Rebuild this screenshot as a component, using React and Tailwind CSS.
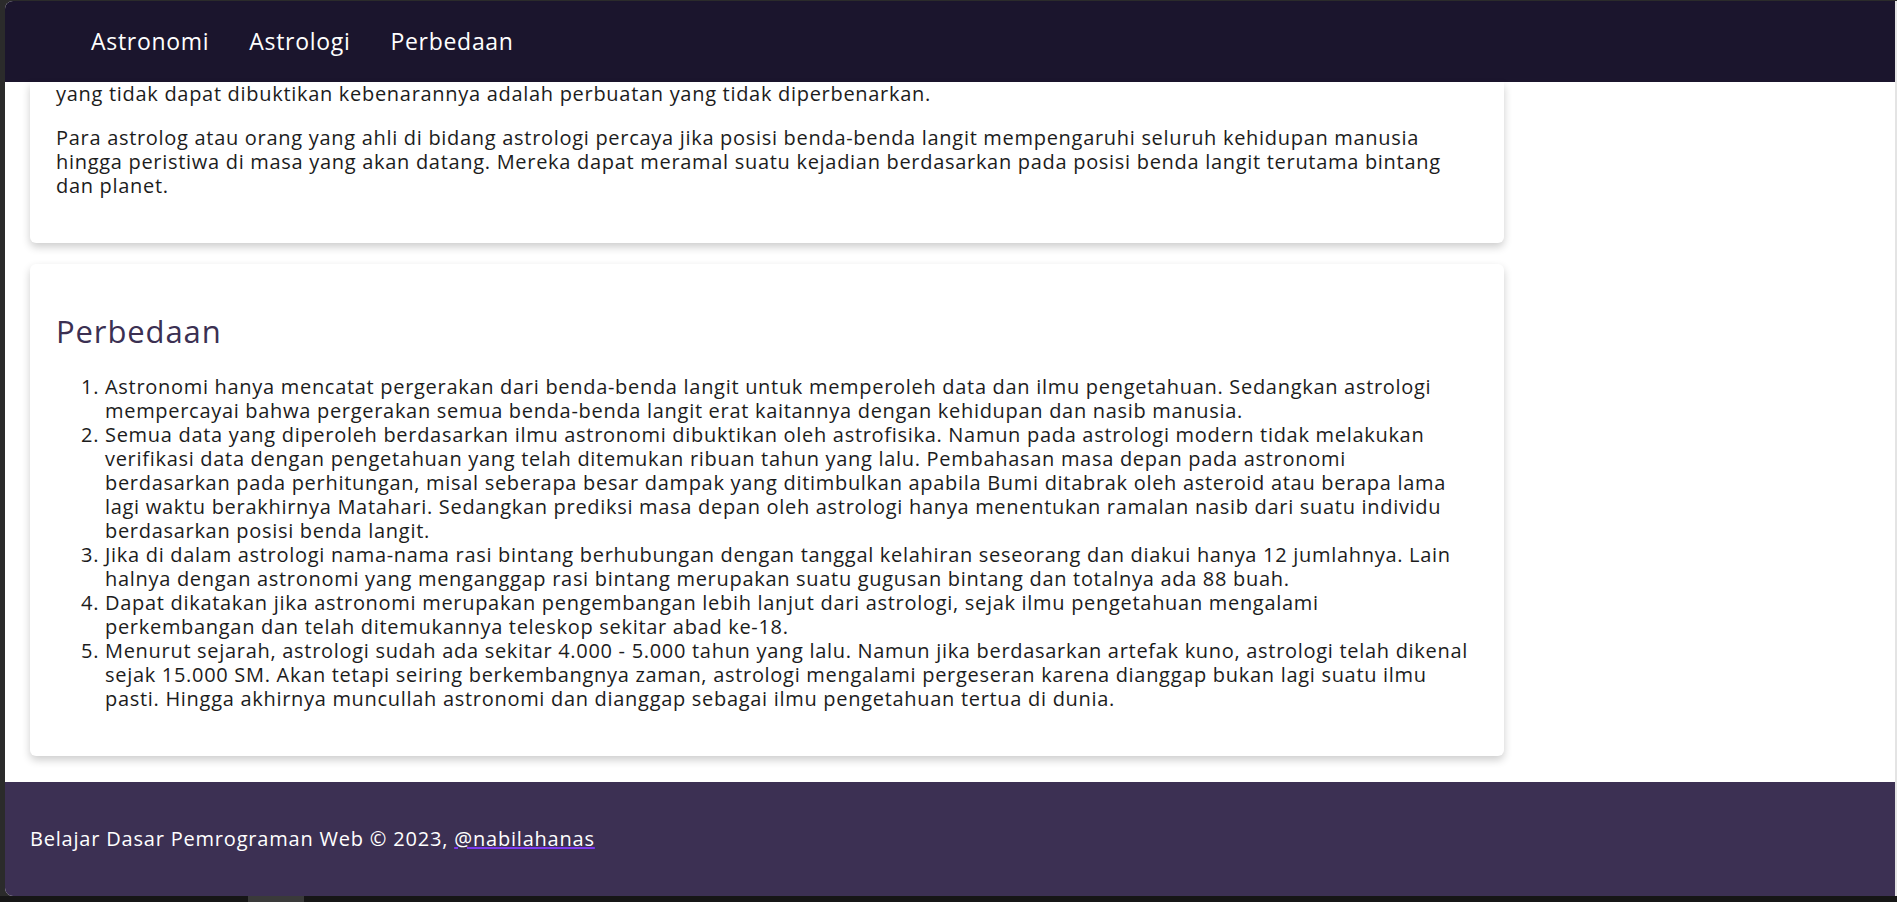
import React from 'react'

const items = [
    'Astronomi hanya mencatat pergerakan dari benda-benda langit untuk memperoleh data dan ilmu pengetahuan. Sedangkan astrologi mempercayai bahwa pergerakan semua benda-benda langit erat kaitannya dengan kehidupan dan nasib manusia.',
    'Semua data yang diperoleh berdasarkan ilmu astronomi dibuktikan oleh astrofisika. Namun pada astrologi modern tidak melakukan verifikasi data dengan pengetahuan yang telah ditemukan ribuan tahun yang lalu. Pembahasan masa depan pada astronomi berdasarkan pada perhitungan, misal seberapa besar dampak yang ditimbulkan apabila Bumi ditabrak oleh asteroid atau berapa lama lagi waktu berakhirnya Matahari. Sedangkan prediksi masa depan oleh astrologi hanya menentukan ramalan nasib dari suatu individu berdasarkan posisi benda langit.',
    'Jika di dalam astrologi nama-nama rasi bintang berhubungan dengan tanggal kelahiran seseorang dan diakui hanya 12 jumlahnya. Lain halnya dengan astronomi yang menganggap rasi bintang merupakan suatu gugusan bintang dan totalnya ada 88 buah.',
    'Dapat dikatakan jika astronomi merupakan pengembangan lebih lanjut dari astrologi, sejak ilmu pengetahuan mengalami perkembangan dan telah ditemukannya teleskop sekitar abad ke-18.',
    'Menurut sejarah, astrologi sudah ada sekitar 4.000 - 5.000 tahun yang lalu. Namun jika berdasarkan artefak kuno, astrologi telah dikenal sejak 15.000 SM. Akan tetapi seiring berkembangnya zaman, astrologi mengalami pergeseran karena dianggap bukan lagi suatu ilmu pasti. Hingga akhirnya muncullah astronomi dan dianggap sebagai ilmu pengetahuan tertua di dunia.',
]

const App = () => {
    return (
        <div className="flex h-[902px] w-[1897px] flex-col overflow-hidden bg-[#2b2b2b] font-['Open_Sans',sans-serif]">
            <div className="flex pt-px pl-[5px]">
                <div className="flex h-[895px] w-[1890px] flex-col overflow-hidden rounded-l-lg bg-white">
                    {/* Navbar */}
                    <nav className="flex h-[81px] shrink-0 items-center gap-[40px] bg-[#1b152d] pl-[86px] text-[23px] tracking-[0.7px] text-white">
                        <a>Astronomi</a>
                        <a>Astrologi</a>
                        <a>Perbedaan</a>
                    </nav>

                    <main className="flex flex-1 flex-col gap-[21px] text-[20px] leading-[24px] tracking-[0.7px] text-[#1c1c1c]">
                        <section className="ml-[25px] w-[1474px] rounded-b-md bg-white px-[26px] pb-[25px] shadow-[0_4px_8px_0_rgba(0,0,0,0.2)]">
                            <p className="mb-[20px]">
                                yang tidak dapat dibuktikan kebenarannya adalah perbuatan yang tidak diperbenarkan.
                            </p>
                            <p className="mb-[20px]">
                                Para astrolog atau orang yang ahli di bidang astrologi percaya jika posisi benda-benda langit mempengaruhi seluruh kehidupan manusia hingga peristiwa di masa yang akan datang. Mereka dapat meramal suatu kejadian berdasarkan pada posisi benda langit terutama bintang dan planet.
                            </p>
                        </section>

                        <section className="ml-[25px] w-[1474px] rounded-md bg-white px-[26px] pt-[48px] pb-[25px] shadow-[0_4px_8px_0_rgba(0,0,0,0.2)]">
                            <h2 className="text-[31px] leading-[39px] tracking-[0.9px] text-[#3b3052]">
                                Perbedaan
                            </h2>
                            <ol className="mt-[24px] mb-[20px] list-decimal pr-[6px] pl-[49px]">
                                {items.map((item, i) => (
                                    <li key={i}>{item}</li>
                                ))}
                            </ol>
                        </section>
                    </main>

                    {/* Footer */}
                    <footer className="flex h-[114px] shrink-0 items-center bg-[#3c3053] px-[25px] text-[20px] tracking-[0.8px] text-white">
                        <p>
                            Belajar Dasar Pemrograman Web © 2023,{' '}
                            <a className="underline decoration-[#7c3aed]">@nabilahanas</a>
                        </p>
                    </footer>
                </div>
                <div className="h-[895px] w-[2px] bg-[#e4e4e4]" />
            </div>
            <div className="flex flex-1 bg-[#161616]">
                <div className="ml-[248px] h-full w-[56px] bg-[#3a3a3a]" />
            </div>
        </div>
    )
}

export default App
